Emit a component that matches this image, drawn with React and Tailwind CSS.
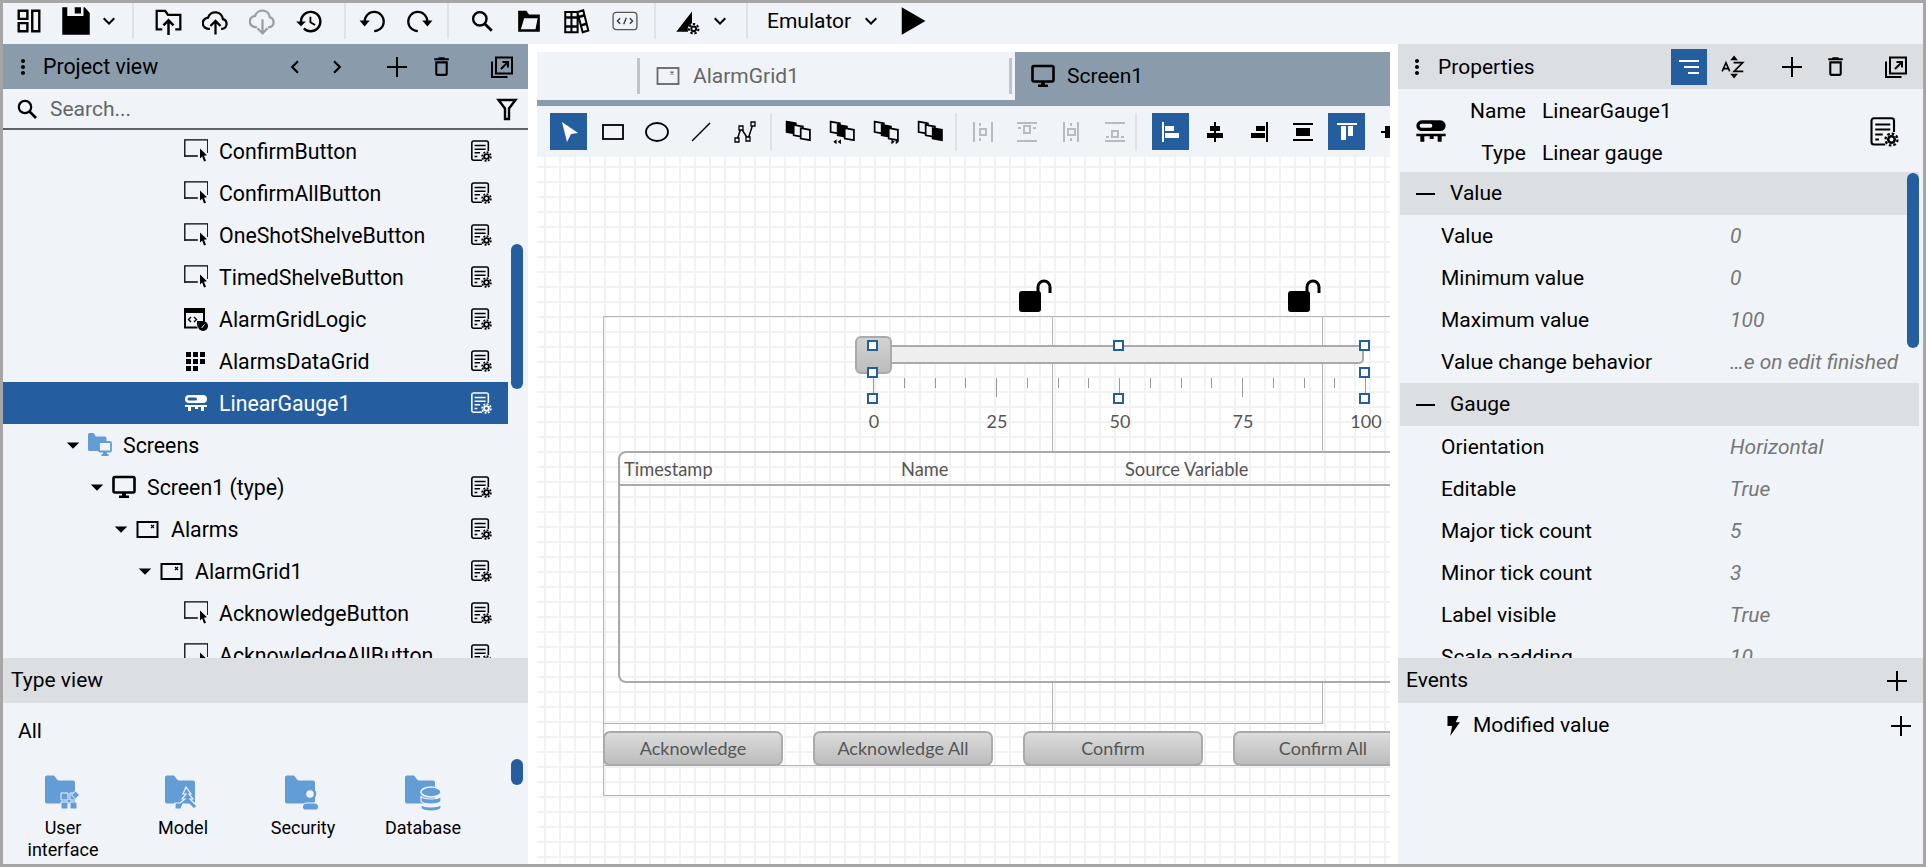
import React from 'react';
import { MdHistory, MdOutlineDelete, MdKeyboardArrowDown, MdChevronLeft, MdChevronRight, MdArrowDropDown, MdMoreVert } from 'react-icons/md';

const Svg = ({ size = 24, className = '', children }) => (
  <svg width={size} height={size} viewBox="0 0 24 24" fill="none" stroke="none" className={`shrink-0 ${className}`}>
    {children}
  </svg>
);

const Gear = ({ x = 18, y = 18, r = 3.6, hole = '#f0f4f8', color = 'currentColor' }) => (
  <g>
    <circle cx={x} cy={y} r={r + 1.2} fill="none" stroke={color} strokeWidth="1.8" strokeDasharray="2.1 1.6" />
    <circle cx={x} cy={y} r={r} fill={color} />
    <circle cx={x} cy={y} r={r * 0.42} fill={hole} />
  </g>
);

const DocGear = ({ size = 22, hole = '#f0f4f8' }) => (
  <Svg size={size}>
    <path d="M13 22H4a2 2 0 01-2-2V3a2 2 0 012-2h14a2 2 0 012 2v9" stroke="currentColor" strokeWidth="1.7" />
    <path d="M5 6h12M5 10h12M5 14h6M5 18h3" stroke="currentColor" strokeWidth="1.7" />
    <Gear hole={hole} />
  </Svg>
);

const ButtonIcon = () => (
  <Svg>
    <path d="M.8 18V.8h23V14M.8 17h13" stroke="currentColor" strokeWidth="1.3" />
    <path d="M16 9.5l7 6.8-3 .4 2 5-2 .8-1.8-5-2.2 2z" fill="currentColor" />
  </Svg>
);

const AlarmIcon = () => (
  <Svg>
    <rect x="1.5" y="5" width="20" height="15" stroke="currentColor" strokeWidth="2" />
    <path d="M15 8l3 3M18 8l-3 3" stroke="currentColor" strokeWidth="1.2" />
  </Svg>
);

const ScreenIcon = ({ size = 24 }) => (
  <Svg size={size}>
    <rect x="1.5" y="2" width="21" height="15.5" rx="1.5" stroke="currentColor" strokeWidth="2.6" />
    <path d="M10 18h4v2.5h3V23H7v-2.5h3z" fill="currentColor" />
  </Svg>
);

const GaugeIcon = ({ size = 24 }) => (
  <Svg size={size}>
    <path fillRule="evenodd" d="M5 4h14a3.5 3.5 0 010 8H5a3.5 3.5 0 010-8zM5 6.5h6.500a1.500 1.500 0 010 3H5a1.500 1.500 0 010-3z" fill="currentColor" />
    <path d="M1 14h22v2h-3v4h-3v-4h-3v2h-3v-2H7v4H4v-4H1z" fill="currentColor" />
  </Svg>
);

const LogicIcon = () => (
  <Svg>
    <path fillRule="evenodd" d="M0 1h21v13.500a6 6 0 00-7.500 7H0zM2 6v13.500h11V14h6V6z" fill="currentColor" />
    <path d="M7 10l-2.500 2.500L7 15M10 10l2.500 2.500L10 15" stroke="currentColor" strokeWidth="1.4" />
    <circle cx="19" cy="19" r="5" fill="currentColor" />
    <path d="M17.500 21l3-3.500" stroke="#f0f4f8" strokeWidth="1" />
  </Svg>
);

const DataGridIcon = () => (
  <Svg>
    <path d="M2 3h5v5H2zM9 3h5v5H9zM16 3h5v5h-5zM2 10h5v5H2zM9 10h5v5H9zM16 10h5v5h-5zM2 17h5v5H2zM9 17h5v5H9z" fill="currentColor" />
  </Svg>
);

const FolderBase = ({ children, size = 38 }) => (
  <svg width={size} height={size} viewBox="0 0 38 38" className="shrink-0">
    <path d="M1 2.500A2 2 0 013 .5h7l4 5h15a2 2 0 012 2v19a2 2 0 01-2 2H3a2 2 0 01-2-2z" fill="#629dd6" />
    {children}
  </svg>
);

const ScreensFolder = () => (
  <Svg>
    <path d="M0 1.500A1.500 1.500 0 011.500 0h4l2.500 3.500h9A1.500 1.500 0 0118.500 5v13H1.500A1.500 1.500 0 010 16.500z" fill="#629dd6" />
    <rect x="11" y="9" width="12" height="9.500" rx="1" fill="#f0f4f8" stroke="#629dd6" strokeWidth="1.800" />
    <path d="M15 19h4v2h1.500v2h-7v-2H15z" fill="#629dd6" />
  </Svg>
);

const Plus = ({ size = 24, className = '' }) => (
  <Svg size={size} className={className}>
    <path d="M12 2v20M2 12h20" stroke="currentColor" strokeWidth="2" />
  </Svg>
);

const Popout = ({ className = '' }) => (
  <Svg className={className}>
    <path d="M6 2.500h16v16H6zM2 6.500v15.500h15.500" stroke="currentColor" strokeWidth="2" />
    <path d="M11 14l7-7M12.500 7H18v5.500" stroke="currentColor" strokeWidth="2" />
  </Svg>
);

const Funnel = ({ className = '' }) => (
  <Svg className={className}>
    <path d="M3.500 3h17l-6.500 8.500V22h-4V11.500z" stroke="currentColor" strokeWidth="2.400" strokeLinejoin="miter" />
  </Svg>
);

const SearchIcon = ({ size = 24, className = '' }) => (
  <Svg size={size} className={className}>
    <circle cx="10" cy="10" r="6.200" stroke="currentColor" strokeWidth="2.200" />
    <path d="M14.500 14.500L21 21" stroke="currentColor" strokeWidth="2.600" />
  </Svg>
);

const Bolt = () => (
  <Svg size={22}>
    <path d="M6 1h12l-3 7h4.500L9 23l2-11H6z" fill="currentColor" />
  </Svg>
);

const LockOpen = () => (
  <svg width="33" height="33" viewBox="0 0 33 33" className="block">
    <path d="M19 17V8a6 6 0 0112 0V14" fill="none" stroke="#000" strokeWidth="3" />
    <rect x="0" y="12" width="22" height="21" rx="3" fill="#000" />
  </svg>
);

const topIcons = {
  layout: (
    <Svg size={26}>
      <path d="M2.500 2.500h8v7.500h-8zM2.500 14h8v7.500h-8zM15 2.500h6.500v19H15z" stroke="currentColor" strokeWidth="2.200" />
    </Svg>
  ),
  save: (
    <Svg size={30}>
      <path fillRule="evenodd" d="M1 1h4v7h13V1h1l4 4.500V23H1zM11 1h5v5h-5z" fill="currentColor" />
    </Svg>
  ),
  folderUp: (
    <Svg size={27}>
      <path d="M6.500 19H1.500V2.500h7.500l2.500 3.500h11V19h-4.500" stroke="currentColor" strokeWidth="2" />
      <path d="M12 24V11M7.500 15.500L12 11l4.500 4.500" stroke="currentColor" strokeWidth="2.200" />
    </Svg>
  ),
  cloudUp: (
    <Svg size={27}>
      <path d="M7 18.500H6a5 5 0 01-.6-10 6.800 6.800 0 0113.200 1.400 4.400 4.400 0 01-.6 8.600h-1" stroke="currentColor" strokeWidth="2" />
      <path d="M12 23.500V12M7.500 16l4.500-4.500 4.500 4.500" stroke="currentColor" strokeWidth="2" />
    </Svg>
  ),
  cloudDown: (
    <Svg size={27} className="text-[#9b9fa3]">
      <path d="M7 17H6a5 5 0 01-.6-10 6.800 6.800 0 0113.200 1.400 4.400 4.400 0 01-.6 8.600h-1" stroke="currentColor" strokeWidth="2" />
      <path d="M12 10v12M7.500 18l4.500 4.500 4.500-4.500" stroke="currentColor" strokeWidth="2" />
    </Svg>
  ),
  undo: (
    <Svg size={27}>
      <path d="M5 12a8.500 8.500 0 118.500 8.500" stroke="currentColor" strokeWidth="2" />
      <path d="M.5 11h9L5 16.500z" fill="currentColor" />
    </Svg>
  ),
  redo: (
    <Svg size={27}>
      <path d="M19 12a8.500 8.500 0 10-8.500 8.500" stroke="currentColor" strokeWidth="2" />
      <path d="M23.500 11h-9L19 16.500z" fill="currentColor" />
    </Svg>
  ),
  folder: (
    <Svg size={26}>
      <path d="M2 2.500h7.500L12 6h10v16H2z" fill="currentColor" />
      <path d="M7.500 9.500H20l-2 10H4.500z" fill="#f0f4f8" />
    </Svg>
  ),
  library: (
    <Svg size={27}>
      <path d="M2 3.500h5.500v18H2zM7.500 3.500h5.500v18H7.500zM13 3.500l5-1.500 4.500 18-5 1.500-4.500-17" stroke="currentColor" strokeWidth="1.800" />
      <path d="M2 8.500h11M2 16.500h11M14 8l5.500-1.500M16 15.500l5-1.500" stroke="currentColor" strokeWidth="2.200" />
    </Svg>
  ),
  code: (
    <Svg size={26}>
      <rect x="1" y="4" width="22" height="16" rx="3" stroke="#555" strokeWidth="1.200" />
      <path d="M7.500 9.500L5 12l2.500 2.500M16.500 9.500L19 12l-2.500 2.500M13.200 9l-2.400 6" stroke="#333" strokeWidth="1.200" />
    </Svg>
  ),
  build: (
    <Svg size={27}>
      <path d="M2 21L16 3v10.500a6 6 0 00-3.500 7.500z" fill="currentColor" />
      <Gear x={17.500} y={18.500} r={3} hole="#f0f4f8" />
    </Svg>
  ),
};

const ToolBtn = ({ children, className = '' }) => (
  <div className={`w-[47px] h-[36px] flex items-center justify-center ${className}`}>{children}</div>
);

const Sep = ({ className = '' }) => <div className={`w-[2px] h-[36px] bg-[#dfe3e6] ${className}`} />;

const TopBar = () => (
  <div className="h-[41px] flex items-start bg-[#f0f4f8] pl-[2px] text-black [&>svg]:mt-[6px]">
    <ToolBtn>{topIcons.layout}</ToolBtn>
    <ToolBtn>{topIcons.save}</ToolBtn>
    <MdKeyboardArrowDown size={24} className="-ml-[2px]" />
    <Sep className="ml-[11px] mr-[11px]" />
    <ToolBtn>{topIcons.folderUp}</ToolBtn>
    <ToolBtn>{topIcons.cloudUp}</ToolBtn>
    <ToolBtn>{topIcons.cloudDown}</ToolBtn>
    <ToolBtn><MdHistory size={29} /></ToolBtn>
    <Sep className="ml-[11px] mr-[3px]" />
    <ToolBtn>{topIcons.undo}</ToolBtn>
    <ToolBtn>{topIcons.redo}</ToolBtn>
    <Sep className="ml-[4px] mr-[9px]" />
    <ToolBtn><SearchIcon size={26} /></ToolBtn>
    <ToolBtn>{topIcons.folder}</ToolBtn>
    <ToolBtn className="ml-[1px]">{topIcons.library}</ToolBtn>
    <ToolBtn className="ml-[1px]">{topIcons.code}</ToolBtn>
    <Sep className="ml-[6px] mr-[8px]" />
    <ToolBtn>{topIcons.build}</ToolBtn>
    <MdKeyboardArrowDown size={24} className="ml-[-3px]" />
    <Sep className="ml-[14px] mr-[19px]" />
    <span className="text-[21px] leading-[36px]">Emulator</span>
    <MdKeyboardArrowDown size={24} className="ml-[8px]" />
    <Svg size={30} className="ml-[15px] mt-[3px]!">
      <path d="M3 1l19 11L3 23z" fill="currentColor" />
    </Svg>
  </div>
);

const treeRows = [
  { label: 'ConfirmButton', level: 4, icon: <ButtonIcon /> },
  { label: 'ConfirmAllButton', level: 4, icon: <ButtonIcon /> },
  { label: 'OneShotShelveButton', level: 4, icon: <ButtonIcon /> },
  { label: 'TimedShelveButton', level: 4, icon: <ButtonIcon /> },
  { label: 'AlarmGridLogic', level: 4, icon: <LogicIcon /> },
  { label: 'AlarmsDataGrid', level: 4, icon: <DataGridIcon /> },
  { label: 'LinearGauge1', level: 4, icon: <GaugeIcon />, selected: true },
  { label: 'Screens', level: 0, icon: <ScreensFolder />, open: true, noDoc: true },
  { label: 'Screen1 (type)', level: 1, icon: <ScreenIcon />, open: true },
  { label: 'Alarms', level: 2, icon: <AlarmIcon />, open: true },
  { label: 'AlarmGrid1', level: 3, icon: <AlarmIcon />, open: true },
  { label: 'AcknowledgeButton', level: 4, icon: <ButtonIcon /> },
  { label: 'AcknowledgeAllButton', level: 4, icon: <ButtonIcon /> },
];

const indents = ['pl-[55px]', 'pl-[79px]', 'pl-[103px]', 'pl-[127px]', 'pl-[151px]'];

const TreeRow = ({ row }) => (
  <div className={`h-[42px] w-[505px] flex items-center pr-[16px] text-[21.3px] ${indents[row.level]} ${row.selected ? 'bg-[#245e9f] text-white' : 'text-black'}`}>
    <div className="w-[30px] flex justify-center">
      {row.open && <MdArrowDropDown size={36} />}
    </div>
    <div className="w-[35px] flex">{row.icon}</div>
    <span className="flex-1 pt-[1px] whitespace-nowrap">{row.label}</span>
    {!row.noDoc && <DocGear hole={row.selected ? '#245e9f' : '#f0f4f8'} />}
  </div>
);

const typeItems = [
  {
    label: ['User', 'interface'],
    art: (
      <FolderBase>
        <path d="M17 18h7v7h-7zM26 18h6v7h-6zM17 27h7v7h-7zM26 27h7v7h-7z" fill="#629dd6" stroke="#f0f4f8" strokeWidth="1" />
        <path d="M31.500 16l4 4-4 4-4-4z" fill="#629dd6" stroke="#f0f4f8" strokeWidth="1" />
      </FolderBase>
    ),
  },
  {
    label: ['Model'],
    art: (
      <FolderBase>
        <path d="M22 12l5 7h-2l4 5h-3l7 7-3 3-5-5h-6l-2 5h-6v-6h5l5-4h-3l4-5h-3z" fill="#629dd6" stroke="#f0f4f8" strokeWidth="1.200" />
      </FolderBase>
    ),
  },
  {
    label: ['Security'],
    art: (
      <FolderBase>
        <circle cx="26" cy="19" r="5" fill="#f0f4f8" stroke="#629dd6" strokeWidth="2.500" />
        <path d="M19 34a4 4 0 014-6h7a4 4 0 014 6 3 3 0 01-3 1H22a3 3 0 01-3-1z" fill="#629dd6" stroke="#f0f4f8" strokeWidth="1" />
      </FolderBase>
    ),
  },
  {
    label: ['Database'],
    art: (
      <FolderBase>
        <ellipse cx="27" cy="17" rx="10" ry="5" fill="#629dd6" stroke="#f0f4f8" strokeWidth="1.500" />
        <path d="M17 21c2 4 18 4 20 0v5c-2 4-18 4-20 0zM17 29c2 4 18 4 20 0v4c-2 4-18 4-20 0z" fill="#629dd6" stroke="#f0f4f8" strokeWidth="1.200" />
      </FolderBase>
    ),
  },
];

const LeftPanel = () => (
  <div className="w-[525px] shrink-0 flex flex-col bg-[#f0f4f8]">
    <div className="h-[45px] flex items-center bg-[#8a9bab] text-black">
      <MdMoreVert size={24} className="ml-[8px]" />
      <span className="ml-[8px] text-[21.3px] w-[239px]">Project view</span>
      <MdChevronLeft size={26} />
      <MdChevronRight size={26} className="ml-[16px]" />
      <Plus size={24} className="ml-[35px]" />
      <MdOutlineDelete size={25} className="ml-[20px]" />
      <Popout className="ml-[36px]" />
    </div>
    <div className="h-[41px] flex items-center border-b-2 border-[#5f6368] text-black">
      <SearchIcon size={24} className="ml-[12px]" />
      <span className="ml-[11px] pt-[2px] text-[21px] text-[#666] flex-1">Search...</span>
      <Funnel className="mr-[9px]" />
    </div>
    <div className="relative h-[528px] overflow-hidden">
      {treeRows.map(row => <TreeRow key={row.label} row={row} />)}
      <div className="absolute right-[5px] top-[114px] w-[12px] h-[145px] rounded-full bg-[#245e9f]" />
    </div>
    <div className="h-[45px] flex items-center px-[8px] pt-[1px] bg-[#dcdfe2] text-[21px] text-black">Type view</div>
    <div className="relative flex-1 overflow-hidden">
      <div className="pl-[15px] pt-[16px] text-[21px] leading-[24px] text-black">All</div>
      <div className="grid grid-cols-4 w-[480px] mt-[32px]">
        {typeItems.map(item => (
          <div key={item.label[0]} className="flex flex-col items-center text-[18px] leading-[22px] text-black">
            {item.art}
            <div className="mt-[4px] text-center">
              {item.label.map(line => <div key={line}>{line}</div>)}
            </div>
          </div>
        ))}
      </div>
      <div className="absolute right-[5px] top-[56px] w-[12px] h-[26px] rounded-full bg-[#245e9f]" />
    </div>
  </div>
);

// z-order buttons: three slanted cards, painted left to right
const Cards = ({ fills, arrows }) => (
  <Svg size={26}>
    {fills.map((fill, i) => (
      <path
        key={i}
        d={`M${1.5 + i * 6.5} ${2.5 + i * 3}l8.500 1.500v9.500l-8.500-1.500z`}
        fill={fill === 'black' ? 'currentColor' : '#f0f4f8'}
        stroke="currentColor"
        strokeWidth="1.600"
      />
    ))}
    {arrows === 'left' && <path d="M4 21l3-2.200v4.400zM8 21l3-2.200v4.400z" fill="currentColor" />}
    {arrows === 'right' && <path d="M20 21l-3-2.200v4.400zM24 21l-3-2.200v4.400z" fill="currentColor" />}
  </Svg>
);

const alignGray = {
  a: <path d="M3 2v20M21 2v20M9 3v3M9 18v3M9 9h6v6H9z" stroke="currentColor" strokeWidth="2" />,
  b: <path d="M2 3h20M2 21h20M3 8h3M18 8h3M9 6h6v7H9z" stroke="currentColor" strokeWidth="2" />,
  c: <path d="M5 2v20M19 2v20M12 3v3M12 18v3M9 9h7v6H9z" stroke="currentColor" strokeWidth="2" />,
  d: <path d="M2 3h20M2 21h20M3 17h3M18 17h3M9 11h6v6H9z" stroke="currentColor" strokeWidth="2" />,
};

const DesignBtn = ({ children, active, className = '' }) => (
  <div className={`w-[37px] h-[37px] shrink-0 flex items-center justify-center ${active ? 'bg-[#245e9f] text-white' : 'text-black'} ${className}`}>
    {children}
  </div>
);

const DesignSep = ({ className = '' }) => <div className={`w-[2px] h-[38px] shrink-0 bg-[#dfe3e6] ${className}`} />;

const DesignToolbar = () => (
  <div className="h-[51px] flex items-center gap-[7px] pl-[13px] bg-[#f0f4f8] overflow-hidden">
    <DesignBtn active>
      <Svg><path d="M5 2l16 11-7 1-4 8z" fill="currentColor" /></Svg>
    </DesignBtn>
    <DesignBtn><Svg><rect x="2" y="5" width="20" height="14" stroke="currentColor" strokeWidth="1.800" /></Svg></DesignBtn>
    <DesignBtn><Svg><ellipse cx="12" cy="12" rx="11" ry="9" stroke="currentColor" strokeWidth="1.800" /></Svg></DesignBtn>
    <DesignBtn><Svg><path d="M3 21L21 3" stroke="currentColor" strokeWidth="1.500" /></Svg></DesignBtn>
    <DesignBtn>
      <Svg>
        <path d="M4 20L8 8l7 11 5-15" stroke="currentColor" strokeWidth="1.500" />
        <path d="M2 18h4v4H2zM6 6h4v4H6zM13 17h4v4h-4zM18 2h4v4h-4z" fill="#f0f4f8" stroke="currentColor" strokeWidth="1.300" />
      </Svg>
    </DesignBtn>
    <DesignSep />
    <DesignBtn><Cards fills={['black', 'white', 'white']} /></DesignBtn>
    <DesignBtn><Cards fills={['white', 'black', 'white']} arrows="left" /></DesignBtn>
    <DesignBtn><Cards fills={['white', 'black', 'white']} arrows="right" /></DesignBtn>
    <DesignBtn><Cards fills={['white', 'white', 'black']} /></DesignBtn>
    <DesignSep />
    {['a', 'b', 'c', 'd'].map(k => (
      <DesignBtn key={k} className="text-[#b9bcbf]!"><Svg>{alignGray[k]}</Svg></DesignBtn>
    ))}
    <DesignSep className="-ml-[5px] mr-[8px]" />
    <DesignBtn active>
      <Svg><path d="M4 2v20" stroke="currentColor" strokeWidth="2" /><path d="M6 6h9v5H6zM6 13h14v5H6z" fill="currentColor" /></Svg>
    </DesignBtn>
    <DesignBtn>
      <Svg><path d="M12 2v20" stroke="currentColor" strokeWidth="2" /><path d="M7 6h10v5H7zM4 13h16v5H4z" fill="currentColor" /></Svg>
    </DesignBtn>
    <DesignBtn>
      <Svg><path d="M20 2v20" stroke="currentColor" strokeWidth="2" /><path d="M9 6h9v5H9zM4 13h14v5H4z" fill="currentColor" /></Svg>
    </DesignBtn>
    <DesignBtn>
      <Svg><path d="M2 4h20M2 20h20" stroke="currentColor" strokeWidth="2" /><path d="M5 8h14v8H5z" fill="currentColor" /></Svg>
    </DesignBtn>
    <DesignBtn active>
      <Svg><path d="M2 4h20" stroke="currentColor" strokeWidth="2" /><path d="M6 6h5v14H6zM13 6h5v10h-5z" fill="currentColor" /></Svg>
    </DesignBtn>
    <DesignBtn>
      <Svg><path d="M2 12h20" stroke="currentColor" strokeWidth="2" /><path d="M6 6h5v12H6z" fill="currentColor" /></Svg>
    </DesignBtn>
  </div>
);

const Handle = ({ className }) => (
  <div className={`absolute w-[11px] h-[11px] bg-white border-2 border-[#245e9f] ${className}`} />
);

const minorTicks = [0, 1, 2, 3, 4, 5, 6, 7, 8, 9, 10, 11, 12, 13, 14, 15, 16];
const scaleLabels = [
  { text: '0', pos: 'left-[317px]' },
  { text: '25', pos: 'left-[440px]' },
  { text: '50', pos: 'left-[563px]' },
  { text: '75', pos: 'left-[686px]' },
  { text: '100', pos: 'left-[809px]' },
];

const mockButtons = [
  { text: 'Acknowledge', pos: 'left-[66px]' },
  { text: 'Acknowledge All', pos: 'left-[276px]' },
  { text: 'Confirm', pos: 'left-[486px]' },
  { text: 'Confirm All', pos: 'left-[696px]' },
];

// design surface: everything in here sits on a free canvas
const Canvas = () => (
  <div className="relative flex-1 overflow-hidden font-['Lato',sans-serif] text-[#555] bg-white bg-[linear-gradient(#f2f1f3_2px,transparent_2px),linear-gradient(90deg,#f2f1f3_2px,transparent_2px)] bg-[size:15px_15px] bg-position-[7px_9px]">
    <div className="absolute left-[66px] top-[159px] w-[900px] h-[480px] border border-[#b5b5b5]" />
    <div className="absolute left-[515px] top-[159px] h-[135px] w-px bg-[#b5b5b5]" />
    <div className="absolute left-[785px] top-[159px] h-[135px] w-px bg-[#b5b5b5]" />
    <div className="absolute left-[515px] top-[525px] h-[50px] w-px bg-[#b5b5b5]" />
    <div className="absolute left-[785px] top-[525px] h-[41px] w-px bg-[#b5b5b5]" />
    <div className="absolute left-[66px] top-[566px] w-[720px] h-px bg-[#b5b5b5]" />
    <div className="absolute left-[66px] top-[608px] w-[800px] h-px bg-[#b5b5b5]" />
    <div className="absolute left-[482px] top-[122px]"><LockOpen /></div>
    <div className="absolute left-[751px] top-[122px]"><LockOpen /></div>

    {/* gauge */}
    <div className="absolute left-[318px] top-[188px] w-[509px] h-[19px] rounded-r-[5px] bg-[#eee] border-y-2 border-r-2 border-[#aaa]" />
    <div className="absolute left-[318px] top-[179px] w-[37px] h-[38px] rounded-[6px] bg-linear-to-b from-[#d2d2d2] to-[#bdbdbd] border-2 border-[#aaa]" />
    {minorTicks.map(i => (
      <div
        key={i}
        className={`absolute top-[221px] w-px bg-[#999] ${i % 4 === 0 ? 'h-[19px]' : 'h-[10px]'}`}
        style={{ left: 336 + i * 30.75 }}
      />
    ))}
    {scaleLabels.map(l => (
      <span key={l.text} className={`absolute top-[253px] w-[40px] text-center text-[18px] leading-[22px] ${l.pos}`}>{l.text}</span>
    ))}
    <Handle className="left-[330px] top-[183px]" />
    <Handle className="left-[576px] top-[183px]" />
    <Handle className="left-[822px] top-[183px]" />
    <Handle className="left-[330px] top-[210px]" />
    <Handle className="left-[822px] top-[210px]" />
    <Handle className="left-[330px] top-[236px]" />
    <Handle className="left-[576px] top-[236px]" />
    <Handle className="left-[822px] top-[236px]" />

    {/* alarm table */}
    <div className="absolute left-[81px] top-[294px] w-[900px] h-[232px] rounded-[8px] border-2 border-[#aaa]">
      <div className="h-[33px] border-b-2 border-[#aaa] relative text-[18.3px] leading-[32px]">
        <span className="absolute left-[4px]">Timestamp</span>
        <span className="absolute left-[281px]">Name</span>
        <span className="absolute left-[505px]">Source Variable</span>
      </div>
    </div>

    {mockButtons.map(b => (
      <div
        key={b.text}
        className={`absolute top-[574px] w-[180px] h-[35px] flex items-center justify-center rounded-[7px] border-2 border-[#aaa] bg-linear-to-b from-[#dcdcdc] to-[#bcbcbc] text-[18px] ${b.pos}`}
      >
        {b.text}
      </div>
    ))}
  </div>
);

const CenterPanel = () => (
  <div className="w-[870px] shrink-0 flex flex-col pl-[9px] pr-[8px] pt-[8px]">
    <div className="h-[48px] flex bg-[#f0f4f8]">
      <div className="w-[478px] relative flex items-center pl-[119px] text-[#666]">
        <div className="absolute left-[100px] top-[6px] h-[36px] w-[3px] bg-[#c0c4c8]" />
        <div className="absolute right-[3px] top-[6px] h-[36px] w-[3px] bg-[#c0c4c8]" />
        <div className="w-[37px]">
          <Svg><rect x="1.500" y="4" width="21" height="16" stroke="currentColor" strokeWidth="1.800" /><path d="M14.500 7.500l3 3M17.500 7.500l-3 3" stroke="currentColor" strokeWidth="1.200" /></Svg>
        </div>
        <span className="pt-[2px] text-[21px]">AlarmGrid1</span>
      </div>
      <div className="flex-1 flex items-center bg-[#8a9bab] text-black pl-[16px]">
        <ScreenIcon />
        <span className="ml-[12px] pt-[2px] text-[21px]">Screen1</span>
      </div>
    </div>
    <div className="h-[6px] bg-[#8a9bab]" />
    <DesignToolbar />
    <Canvas />
  </div>
);

const propSections = [
  {
    title: 'Value',
    rows: [
      ['Value', '0'],
      ['Minimum value', '0'],
      ['Maximum value', '100'],
      ['Value change behavior', '…e on edit finished'],
    ],
  },
  {
    title: 'Gauge',
    rows: [
      ['Orientation', 'Horizontal'],
      ['Editable', 'True'],
      ['Major tick count', '5'],
      ['Minor tick count', '3'],
      ['Label visible', 'True'],
      ['Scale padding', '10'],
    ],
  },
];

const RightPanel = () => (
  <div className="flex-1 flex flex-col bg-[#f0f4f8] text-black text-[21px]">
    <div className="h-[45px] flex items-center bg-[#dcdfe2]">
      <MdMoreVert size={24} className="ml-[7px]" />
      <span className="ml-[9px] pt-[2px] w-[233px]">Properties</span>
      <div className="w-[36px] h-[36px] bg-[#245e9f] flex items-center justify-center">
        <Svg>
          <path d="M2 6h20M7 12h15M11 18h11" stroke="#fff" strokeWidth="2" />
        </Svg>
      </div>
      <Svg size={26} className="ml-[13px]">
        <path d="M2 16l3.500-8L9 16M3 13.500h5M12.500 8H21l-8 8h8.500M11 5l2-2.500L15 5zM11 19l2 2.500 2-2.500z" stroke="currentColor" strokeWidth="1.500" />
      </Svg>
      <Plus size={24} className="ml-[34px]" />
      <MdOutlineDelete size={25} className="ml-[19px]" />
      <Popout className="ml-[36px]" />
    </div>
    <div className="h-[83px] flex items-center relative">
      <div className="ml-[17px] w-[32px]"><GaugeIcon size={32} /></div>
      <div className="ml-[23px] pt-[2px] grid grid-cols-[auto_auto] gap-x-[16px] gap-y-[16px] leading-[26px]">
        <span className="text-right">Name</span><span>LinearGauge1</span>
        <span className="text-right">Type</span><span>Linear gauge</span>
      </div>
      <div className="absolute right-[24px] top-[28px]"><DocGear size={30} /></div>
    </div>
    <div className="relative h-[486px] overflow-hidden">
      {propSections.map(section => (
        <div key={section.title}>
          <div className="h-[43px] ml-[2px] mr-[4px] flex items-center bg-[#dcdfe2]">
            <div className="ml-[16px] w-[19px] h-[2px] bg-black" />
            <span className="ml-[15px] pt-[1px]">{section.title}</span>
          </div>
          {section.rows.map(([name, value]) => (
            <div key={name} className="h-[42px] flex items-center pl-[43px] pt-[2px]">
              <span className="w-[289px]">{name}</span>
              <span className="italic text-[#777] whitespace-nowrap">{value}</span>
            </div>
          ))}
        </div>
      ))}
      <div className="absolute right-[4px] top-[1px] w-[12px] h-[175px] rounded-full bg-[#245e9f]" />
    </div>
    <div className="h-[45px] shrink-0 flex items-center justify-between pl-[8px] pr-[14px] pt-[1px] bg-[#dcdfe2]">
      Events
      <Plus size={24} />
    </div>
    <div className="h-[44px] shrink-0 flex items-center pl-[44px] pr-[10px] pt-[1px]">
      <Bolt />
      <span className="ml-[9px] flex-1">Modified value</span>
      <Plus size={24} />
    </div>
  </div>
);

const App = () => (
  <div className="w-[1926px] h-[867px] border-[3px] border-[#a6a6a6] bg-white flex flex-col overflow-hidden font-['Roboto',sans-serif]">
    <TopBar />
    <div className="flex flex-1 min-h-0">
      <LeftPanel />
      <CenterPanel />
      <RightPanel />
    </div>
  </div>
);

export default App;
